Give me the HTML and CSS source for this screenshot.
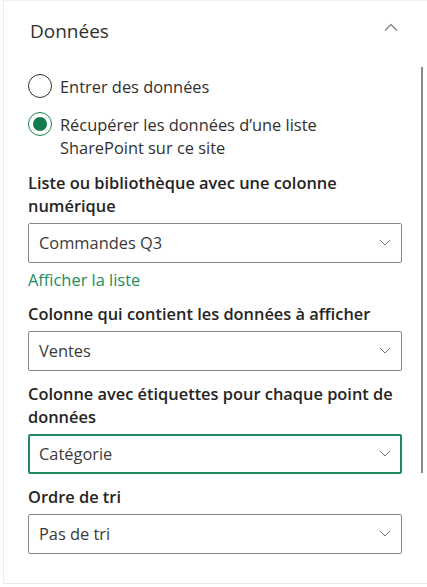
FILE: index.html
```html
<!DOCTYPE html>
<html lang="fr">
<head>
<meta charset="utf-8">
<link rel="stylesheet" href="styles.css">
</head>
<body>
<div class="panel">
  <div class="header">
    <span class="title">Données</span>
    <svg class="chev-up" width="14" height="8" viewBox="0 0 14 8"><path d="M1 7.5L7 1.5L13 7.5" fill="none" stroke="#7a7876" stroke-width="1.1"/></svg>
  </div>
  <div class="content">
    <div class="radios">
      <div class="radio">
        <span class="circle"></span>
        <span class="rlabel">Entrer des données</span>
      </div>
      <div class="radio checked">
        <span class="circle"><span class="dot"></span></span>
        <span class="rlabel">Récupérer les données d’une liste<br>SharePoint sur ce site</span>
      </div>
    </div>
    <div class="field">
      <div class="label">Liste ou bibliothèque avec une colonne numérique</div>
      <div class="dropdown"><span>Commandes Q3</span><svg class="chev" width="12" height="7" viewBox="0 0 12 7"><path d="M1 1L6 6L11 1" fill="none" stroke="#7a7876" stroke-width="1"/></svg></div>
      <a class="link">Afficher la liste</a>
    </div>
    <div class="field">
      <div class="label">Colonne qui contient les données à afficher</div>
      <div class="dropdown"><span>Ventes</span><svg class="chev" width="12" height="7" viewBox="0 0 12 7"><path d="M1 1L6 6L11 1" fill="none" stroke="#7a7876" stroke-width="1"/></svg></div>
    </div>
    <div class="field">
      <div class="label">Colonne avec étiquettes pour chaque point de données</div>
      <div class="dropdown focused"><span>Catégorie</span><svg class="chev" width="12" height="7" viewBox="0 0 12 7"><path d="M1 1L6 6L11 1" fill="none" stroke="#7a7876" stroke-width="1"/></svg></div>
    </div>
    <div class="field">
      <div class="label">Ordre de tri</div>
      <div class="dropdown"><span>Pas de tri</span><svg class="chev" width="12" height="7" viewBox="0 0 12 7"><path d="M1 1L6 6L11 1" fill="none" stroke="#7a7876" stroke-width="1"/></svg></div>
    </div>
  </div>
  <div class="scrollbar"></div>
</div>
</body>
</html>
```

FILE: styles.css
```css
html, body {
  margin: 0;
  padding: 0;
  background: #ffffff;
}
body {
  font-family: "Open Sans", "Noto Sans", sans-serif;
  color: #323130;
}
.panel {
  margin-left: 3px;
  height: 584px;
  border-left: 1px solid #ececec;
  border-bottom: 1px solid #e6e6e6;
  border-top: 1px solid #f2f2f2;
  box-sizing: border-box;
  position: relative;
}
.header {
  display: flex;
  align-items: center;
  justify-content: space-between;
  padding: 0 29px 0 26px;
  height: 59px;
}
.title {
  font-size: 19px;
  line-height: 26px;
  color: #323130;
}
.chev-up {
  margin-top: -7px;
}
.content {
  padding: 14px 25px 0 24px;
  display: flex;
  flex-direction: column;
}
.radios {
  display: flex;
  flex-direction: column;
  gap: 14px;
  margin-bottom: 12px;
}
.radio {
  display: flex;
  align-items: flex-start;
  gap: 8px;
}
.circle {
  width: 22px;
  height: 22px;
  border: 1px solid #323130;
  border-radius: 50%;
  flex: none;
  display: flex;
  align-items: center;
  justify-content: center;
}
.checked .circle {
  border-color: #1a7f55;
}
.dot {
  width: 14px;
  height: 14px;
  border-radius: 50%;
  background: #0f7b4e;
}
.rlabel {
  font-size: 16.4px;
  line-height: 23px;
  padding-top: 0.5px;
}
.field {
  display: flex;
  flex-direction: column;
  margin-bottom: 11px;
}
.label {
  font-size: 16.4px;
  font-weight: 600;
  line-height: 23px;
  color: #252423;
  margin-bottom: 6px;
}
.dropdown {
  height: 40px;
  box-sizing: border-box;
  border: 1px solid #8a8886;
  border-radius: 2px;
  display: flex;
  align-items: center;
  justify-content: space-between;
  padding: 0 10px;
  font-size: 16.4px;
  color: #3b3a39;
}
.dropdown.focused {
  border: 2px solid #218a5e;
  padding: 0 9px;
}
.link {
  color: #238c60;
  font-size: 16.4px;
  line-height: 23px;
  margin-top: 5px;
}
.scrollbar {
  position: absolute;
  right: 4px;
  top: 66px;
  width: 2px;
  height: 406px;
  background: #8a8886;
}
```
